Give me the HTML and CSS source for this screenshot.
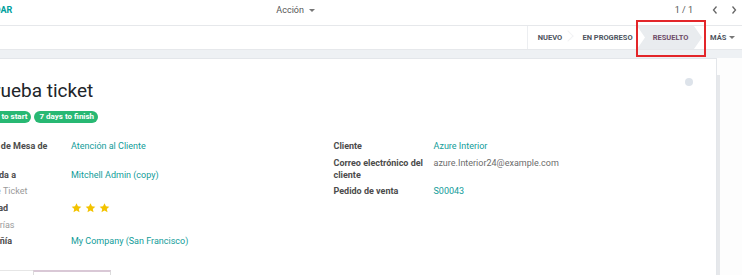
FILE: index.html
```html
<!DOCTYPE html>
<html lang="es">
<head>
    <meta charset="UTF-8">
    <meta name="viewport" content="width=device-width, initial-scale=1.0">
    <title>Prueba ticket</title>
    <link rel="stylesheet" href="styles.css">
</head>
<body>

    <!-- Panel de control -->
    <div class="control-panel">
        <a href="#" class="btn-save">GUARDAR</a>
        <div class="cp-action">Acción <span class="caret"></span></div>
        <div class="pager">
            <span class="pager-value">1 / 1</span>
            <svg class="chev" width="8" height="10" viewBox="0 0 8 10"><path d="M5.5 1.5 L2.5 5 L5.5 8.5" fill="none" stroke="#666" stroke-width="1.3"/></svg>
            <svg class="chev" width="8" height="10" viewBox="0 0 8 10"><path d="M2.5 1.5 L5.5 5 L2.5 8.5" fill="none" stroke="#666" stroke-width="1.3"/></svg>
        </div>
    </div>

    <div class="form-view">
        <!-- Barra de estados -->
        <div class="statusbar">
            <div class="status-list">
                <span class="status status-nuevo">NUEVO</span>
                <span class="status status-progreso">EN PROGRESO</span>
                <span class="status status-active">RESUELTO</span>
                <span class="status status-more">MÁS <span class="caret"></span></span>
            </div>
        </div>

        <!-- Hoja del formulario -->
        <div class="sheet-bg">
            <div class="sheet">
                <span class="sheet-dot"></span>
                <h1 class="title">Prueba ticket</h1>
                <div class="badges">
                    <span class="badge">2 days to start</span>
                    <span class="badge">7 days to finish</span>
                </div>

                <div class="groups">
                    <div class="group">
                        <div class="label">Equipo de Mesa de Ayuda</div>
                        <div class="value link">Atención al Cliente</div>

                        <div class="label">Asignada a</div>
                        <div class="value link">Mitchell Admin (copy)</div>

                        <div class="label empty">Tipo de Ticket</div>
                        <div class="value"></div>

                        <div class="label">Prioridad</div>
                        <div class="value stars">
                            <svg width="11" height="11" viewBox="0 0 24 24"><path d="M12 1.5l3.2 6.9 7.3.8-5.5 5 1.6 7.3L12 17.7l-6.6 3.8L7 14.2l-5.5-5 7.3-.8z" fill="#f3c300"/></svg>
                            <svg width="11" height="11" viewBox="0 0 24 24"><path d="M12 1.5l3.2 6.9 7.3.8-5.5 5 1.6 7.3L12 17.7l-6.6 3.8L7 14.2l-5.5-5 7.3-.8z" fill="#f3c300"/></svg>
                            <svg width="11" height="11" viewBox="0 0 24 24"><path d="M12 1.5l3.2 6.9 7.3.8-5.5 5 1.6 7.3L12 17.7l-6.6 3.8L7 14.2l-5.5-5 7.3-.8z" fill="#f3c300"/></svg>
                        </div>

                        <div class="label empty">Categorías</div>
                        <div class="value"></div>

                        <div class="label">Compañía</div>
                        <div class="value link">My Company (San Francisco)</div>
                    </div>

                    <div class="group">
                        <div class="label">Cliente</div>
                        <div class="value link">Azure Interior</div>

                        <div class="label">Correo electrónico del cliente</div>
                        <div class="value muted">azure.Interior24@example.com</div>

                        <div class="label">Pedido de venta</div>
                        <div class="value link">S00043</div>
                    </div>
                </div>

                <!-- Pestañas -->
                <div class="notebook">
                    <span class="tab">Descripción</span>
                    <span class="tab tab-active">Información extra</span>
                </div>
            </div>
        </div>
    </div>

    <!-- Marca roja sobre el estado -->
    <div class="highlight"></div>

</body>
</html>
```

FILE: styles.css
```css
body {
    font-family: Roboto, "Liberation Sans", sans-serif;
    font-size: 9px;
    margin: 0;
    padding: 0;
    background-color: #fdfdfd;
    color: #4c4c4c;
    width: 742px;
    height: 275px;
    overflow: hidden;
    position: relative;
}

/* Panel de control */
.control-panel {
    display: flex;
    align-items: center;
    height: 19px;
    background-color: #ffffff;
    padding-bottom: 6px;
}

.btn-save {
    color: #00a09d;
    font-weight: bold;
    text-decoration: none;
    margin-left: -29px;
    line-height: 12px;
}

.cp-action {
    margin-left: 264px;
    color: #555;
    line-height: 12px;
}

.caret {
    display: inline-block;
    width: 0;
    height: 0;
    margin-left: 3px;
    vertical-align: middle;
    border-top: 3px solid #777;
    border-left: 3px solid transparent;
    border-right: 3px solid transparent;
}

.pager {
    margin-left: auto;
    display: flex;
    align-items: center;
    color: #555;
    padding-right: 4px;
}

.pager-value {
    margin-right: 16px;
}

.chev {
    margin-left: 2px;
    margin-right: 9px;
}

.chev:last-child {
    margin-right: 0;
}

/* Barra de estados */
.statusbar {
    background-color: #ffffff;
    border-top: 1px solid #e6e8eb;
    border-bottom: 1px solid #e6e8eb;
    height: 23px;
    display: flex;
    justify-content: flex-end;
}

.status-list {
    display: flex;
    align-items: stretch;
    border-left: 1px solid #eceef1;
}

.status {
    display: flex;
    align-items: center;
    font-size: 7.5px;
    font-weight: bold;
    color: #4e5460;
    position: relative;
}

.status-nuevo {
    width: 44px;
    justify-content: center;
}

.status-nuevo::after {
    content: "";
    position: absolute;
    right: 0;
    top: 5px;
    width: 7px;
    height: 7px;
    border-right: 1px solid #f2f3f5;
    border-top: 1px solid #f2f3f5;
    transform: translateY(1px) rotate(45deg);
}

.status-progreso {
    width: 59px;
    padding-left: 6px;
    justify-content: center;
}

.status-active {
    width: 65px;
    justify-content: center;
    padding-left: 2px;
    box-sizing: border-box;
    background-color: #e9ecef;
    color: #6f4d69;
    clip-path: polygon(0 0, calc(100% - 8px) 0, 100% 50%, calc(100% - 8px) 100%, 0 100%, 8px 50%);
}

.status-more {
    width: 40px;
    padding-left: 8px;
    box-sizing: border-box;
}

/* Hoja */
.sheet-bg {
    padding-top: 8px;
    background: linear-gradient(#eef1f4 0, #eef1f4 8px, transparent 8px);
}

.sheet {
    position: relative;
    box-sizing: border-box;
    margin-left: -50px;
    width: 767px;
    height: 240px;
    padding: 20px 21px 0 21px;
    background-color: #ffffff;
    border-top: 1px solid #e3e6ea;
    border-right: 1px solid #e3e6ea;
    box-shadow: 3px 17px 0 0 #e6e8eb;
}

.sheet-dot {
    position: absolute;
    top: 19px;
    right: 23px;
    width: 8px;
    height: 8px;
    border-radius: 50%;
    background-color: #dde3ea;
}

.title {
    margin: 0 0 9px 11px;
    font-size: 19px;
    font-weight: normal;
    line-height: 23px;
    color: #212529;
}

.badges {
    display: flex;
    gap: 3px;
    margin-bottom: 15px;
}

.badge {
    background-color: #28b873;
    color: #ffffff;
    font-size: 8px;
    font-weight: bold;
    line-height: 12px;
    padding: 0 4px 0 5px;
    border-radius: 6px;
}

.groups {
    display: grid;
    grid-template-columns: 1fr 1fr;
    gap: 1px;
}

.group {
    display: grid;
    grid-template-columns: 100px 1fr;
    align-content: start;
}

.label,
.value {
    line-height: 12px;
    padding: 2.3px 0;
}

.label {
    font-weight: bold;
    color: #4c4c4c;
    padding-right: 8px;
}

.label.empty {
    font-weight: normal;
    color: #9a9a9a;
}

.link {
    color: #119c99;
}

.muted {
    color: #6c6c6c;
}

.stars {
    display: flex;
    gap: 3px;
    align-items: center;
}

.stars svg {
    height: 12px;
}

/* Pestañas */
.notebook {
    display: flex;
    margin-top: 20px;
}

.tab {
    box-sizing: border-box;
    width: 62px;
    padding: 6px 10px;
    color: #4c4c4c;
    border-top: 1px solid #e6e6e6;
    white-space: nowrap;
    overflow: hidden;
}

.tab-active {
    width: 78px;
    border: 1px solid #dcdcdc;
    border-top: 2px solid #d9c8d6;
    border-bottom: none;
}

/* Recuadro rojo */
.highlight {
    position: absolute;
    left: 636px;
    top: 20px;
    width: 66px;
    height: 33px;
    border: 2px solid #e3262a;
}
```
